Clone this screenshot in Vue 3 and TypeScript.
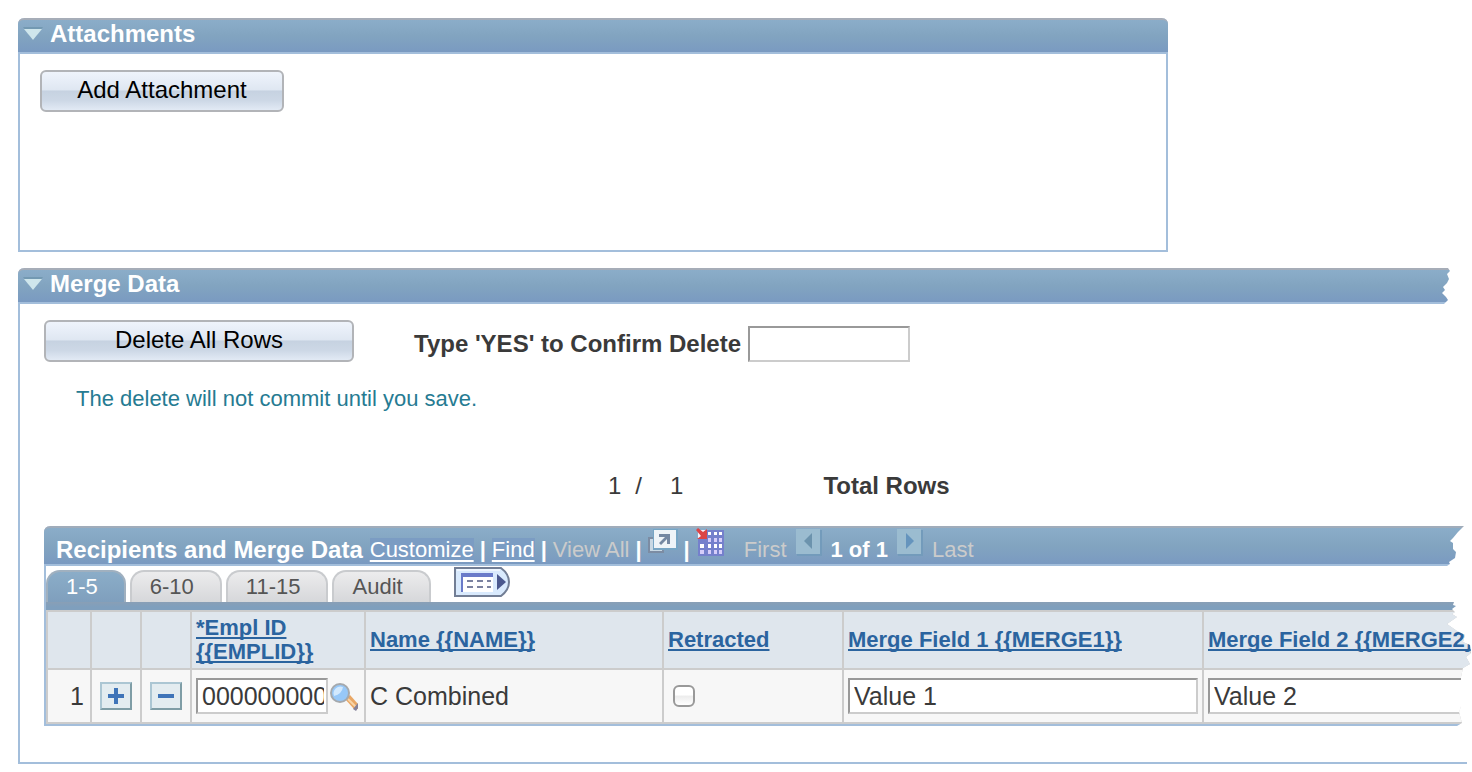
<script setup lang="ts">
import { ref } from 'vue'

interface Row {
  id: number
  emplId: string
  name: string
  retracted: boolean
  merge1: string
  merge2: string
}

const confirmText = ref('')
const tabs: string[] = ['1-5', '6-10', '11-15', 'Audit']
const activeTab = ref('1-5')
const headers: string[] = [
  'Name {{NAME}}',
  'Retracted',
  'Merge Field 1 {{MERGE1}}',
  'Merge Field 2 {{MERGE2}}',
]
const emplHeader: string[] = ['*Empl ID', '{{EMPLID}}']
const rows = ref<Row[]>([
  { id: 1, emplId: '00000000001', name: 'C Combined', retracted: false, merge1: 'Value 1', merge2: 'Value 2' },
])
</script>

<template>
  <main class="page">
    <section class="panel attachments">
      <h2 class="panel-head">
        <svg class="caret" viewBox="0 0 20 14" aria-hidden="true">
          <path d="M0 0h20L10 13z" fill="#7399b2" />
          <path d="M1 2h18L10 13z" fill="#cfe6ec" />
        </svg>
        Attachments
      </h2>
      <div class="panel-body">
        <button class="btn add" type="button">Add Attachment</button>
      </div>
    </section>

    <section class="panel merge">
      <h2 class="panel-head torn-head">
        <svg class="caret" viewBox="0 0 20 14" aria-hidden="true">
          <path d="M0 0h20L10 13z" fill="#7399b2" />
          <path d="M1 2h18L10 13z" fill="#cfe6ec" />
        </svg>
        Merge Data
      </h2>
      <div class="panel-body">
        <div class="delete-row">
          <button class="btn delete" type="button">Delete All Rows</button>
          <label class="confirm-label" for="confirm">Type 'YES' to Confirm Delete</label>
          <input id="confirm" v-model="confirmText" class="field confirm" type="text" />
        </div>
        <p class="note">The delete will not commit until you save.</p>
        <div class="counter">
          <span class="current">1</span>
          <span class="slash">/</span>
          <span class="total">1</span>
          <strong>Total Rows</strong>
        </div>

        <div class="grid">
          <div class="grid-head">
            <h3>Recipients and Merge Data</h3>
            <a href="#">Customize</a>
            <b>|</b>
            <a href="#">Find</a>
            <b>|</b>
            <span class="muted">View All</span>
            <b>|</b>
            <button class="icon-btn" type="button" aria-label="Zoom grid">
              <svg width="30" height="26" viewBox="0 0 30 26">
                <path d="M0 9h16v16H0z" fill="#7c8ca3" />
                <path d="M2 11h12v12H2z" fill="#c8d8e4" />
                <path d="M5 1h25v21H5z" fill="#76a5c4" />
                <path d="M6 2h22v18H6z" fill="#eef4f8" />
                <path d="M11 6h11v10h-3v-5l-6 6-2-2 6-6h-6z" fill="#7488a2" />
              </svg>
            </button>
            <b>|</b>
            <button class="icon-btn" type="button" aria-label="Download">
              <svg width="28" height="30" viewBox="0 0 28 30">
                <path d="M2 2h26v26H2z" fill="#7580cc" />
                <path d="M2 2h9v9H2z" fill="#f4f4fc" />
                <path d="M12 4h3v3h-3zM18 4h3v3h-3zM23 4h3v3h-3zM4 16h4v4H4zM12 16h3v4h-3zM18 16h3v4h-3zM23 16h3v4h-3z" fill="#fff" />
                <path d="M12 10h3v4h-3zM18 10h3v4h-3zM23 10h3v4h-3zM4 22h4v4H4zM12 22h3v4h-3zM18 22h3v4h-3zM23 22h3v4h-3z" fill="#d5cdfa" />
                <path d="M0 2l2-2 5 4 4-3v10H1l4-3z" fill="#dc4548" />
              </svg>
            </button>
            <span class="muted first">First</span>
            <button class="icon-btn nav" type="button" disabled aria-label="Previous">
              <svg width="26" height="28" viewBox="0 0 26 28">
                <path d="M1 2h25v26H1z" fill="#739bbb" />
                <path d="M0 1h24v25H0z" fill="#9bbcd0" />
                <path d="M16 5v16l-8-8z" fill="#6c93ad" />
              </svg>
            </button>
            <strong>1 of 1</strong>
            <button class="icon-btn nav" type="button" disabled aria-label="Next">
              <svg width="26" height="28" viewBox="0 0 26 28">
                <path d="M1 2h25v26H1z" fill="#739bbb" />
                <path d="M0 1h24v25H0z" fill="#9bbcd0" />
                <path d="M9 5v16l8-8z" fill="#6594bd" />
              </svg>
            </button>
            <span class="muted">Last</span>
          </div>

          <div class="tabs">
            <button
              v-for="tab in tabs"
              :key="tab"
              type="button"
              class="tab"
              :class="{ active: tab === activeTab }"
              @click="activeTab = tab"
            >{{ tab }}</button>
            <button class="show-all" type="button" aria-label="Show all columns">
              <svg width="56" height="31" viewBox="0 0 56 31">
                <path d="M1 1h46q8 6 8 14t-8 14H1z" fill="#d9eafd" stroke="#727e95" stroke-width="2" />
                <path d="M3 3h43" stroke="#eef6ff" stroke-width="2" />
                <path d="M7 7h32v18H7z" fill="#fff" />
                <path d="M7 6h32v4H9v15H7z" fill="#6a7bc9" />
                <path d="M13 14h6m4 0h6m4 0h4M13 20h6m4 0h6m4 0h4" stroke="#7b82a0" stroke-width="2" />
                <path d="M43 7v16l9-8z" fill="#4a588e" />
              </svg>
            </button>
          </div>
          <div class="bar"></div>

          <table>
            <colgroup>
              <col class="c-num" />
              <col class="c-act" />
              <col class="c-act" />
              <col class="c-empl" />
              <col class="c-name" />
              <col class="c-ret" />
              <col class="c-merge" />
              <col />
            </colgroup>
            <thead>
              <tr>
                <th></th>
                <th></th>
                <th></th>
                <th scope="col">
                  <a href="#">{{ emplHeader[0] }}<br />{{ emplHeader[1] }}</a>
                </th>
                <th v-for="h in headers" :key="h" scope="col"><a href="#">{{ h }}</a></th>
              </tr>
            </thead>
            <tbody>
              <tr v-for="row in rows" :key="row.id">
                <td class="num">{{ row.id }}</td>
                <td class="act">
                  <button class="icon-btn" type="button" aria-label="Add row">
                    <svg width="32" height="28" viewBox="0 0 32 28">
                      <path d="M0 0h32v28H0z" fill="#7f9da6" />
                      <path d="M0 0h32l-2 2H2v24l-2 2z" fill="#abc6d3" />
                      <path d="M2 2h28v24H2z" fill="#e3ecf0" />
                      <path d="M14 6h4v6h6v4h-6v6h-4v-6H8v-4h6z" fill="#3f74b8" />
                    </svg>
                  </button>
                </td>
                <td class="act">
                  <button class="icon-btn" type="button" aria-label="Delete row">
                    <svg width="32" height="28" viewBox="0 0 32 28">
                      <path d="M0 0h32v28H0z" fill="#7f9da6" />
                      <path d="M0 0h32l-2 2H2v24l-2 2z" fill="#abc6d3" />
                      <path d="M2 2h28v24H2z" fill="#e3ecf0" />
                      <path d="M8 12h16v4H8z" fill="#3f74b8" />
                    </svg>
                  </button>
                </td>
                <td>
                  <div class="lookup">
                    <input v-model="row.emplId" class="field empl" type="text" aria-label="Empl ID" />
                    <button class="icon-btn" type="button" aria-label="Look up Empl ID">
                      <svg width="30" height="30" viewBox="0 0 30 30">
                        <path d="M15 18l5-4 8 9v5h-4z" fill="#e9a765" />
                        <path d="M18 18l8 8" stroke="#f8d5a8" stroke-width="2" />
                        <path d="M23 28l5-6v5l-2 3z" fill="#85829a" />
                        <circle cx="10" cy="12" r="9" fill="#97c8f8" stroke="#a5a9ad" stroke-width="2" />
                        <path d="M4 15a7 7 0 0 1 9-9q-1 7-9 9z" fill="#d2e9fe" />
                      </svg>
                    </button>
                  </div>
                </td>
                <td>{{ row.name }}</td>
                <td><input v-model="row.retracted" class="check" type="checkbox" aria-label="Retracted" /></td>
                <td><input v-model="row.merge1" class="field wide" type="text" aria-label="Merge Field 1" /></td>
                <td class="last"><input v-model="row.merge2" class="field wide" type="text" aria-label="Merge Field 2" /></td>
              </tr>
            </tbody>
          </table>
        </div>
      </div>
    </section>
  </main>
</template>

<style>
body {
  margin: 0;
  background: #fff;
}
</style>

<style scoped>
.page {
  padding: 18px 0 0 18px;
  overflow: hidden;
  font-family: "Liberation Sans", Arial, sans-serif;
  font-size: 24px;
  line-height: 28px;
  color: #3a3a3a;
  white-space: nowrap;
}
.page * {
  box-sizing: border-box;
}
h2,
h3,
p {
  margin: 0;
}
button,
input {
  font: inherit;
  color: inherit;
}
button {
  cursor: pointer;
}
svg {
  display: block;
}
.panel {
  border: 0 solid #a3bedb;
}
.attachments {
  max-width: 1150px;
  min-height: 234px;
  border-width: 0 2px 2px;
  border-radius: 6px 6px 0 0;
}
.merge {
  margin: 16px 5px 0 0;
  border-width: 0 0 2px 2px;
  border-radius: 6px 0 0 0;
}
.panel-head {
  display: flex;
  align-items: center;
  gap: 7px;
  margin-left: -2px;
  padding: 0 5px 4px;
  height: 36px;
  border-top: 2px solid #a6adb8;
  border-bottom: 2px solid #a3bedb;
  border-radius: 6px 6px 0 0;
  background: linear-gradient(#8badc9, #82a4c0 50%, #7a9ac1);
  font-size: 24px;
  line-height: 28px;
  color: #fff;
}
.attachments .panel-head {
  margin-right: -2px;
}
.torn-head {
  margin-right: 17px;
  border-top-right-radius: 0;
  clip-path: polygon(0 0, calc(100% - 2px) 0, 100% 3px, calc(100% - 3px) 6px, calc(100% - 1px) 11px, calc(100% - 3px) 15px, calc(100% - 7px) 19px, calc(100% - 5px) 22px, calc(100% - 8px) 25px, calc(100% - 4px) 29px, calc(100% - 2px) 32px, calc(100% - 6px) 36px, 0 36px);
}
.caret {
  width: 20px;
  height: 14px;
}
.attachments .panel-body {
  padding: 16px 20px;
}
.merge .panel-body {
  padding: 16px 0 36px 24px;
}
.btn {
  display: block;
  height: 42px;
  padding: 0 0 2px;
  border: 2px solid #b2b4b8;
  border-radius: 6px;
  background: linear-gradient(#eff4fc, #dfe7f2 47%, #c6d2e1 50%, #cdd8e6 75%, #e2eaf5);
  color: #000;
}
.add {
  width: 244px;
}
.delete {
  width: 310px;
}
.delete-row {
  display: flex;
  align-items: flex-end;
}
.confirm-label {
  margin-left: 60px;
  padding-bottom: 4px;
  font-weight: bold;
}
.field {
  height: 36px;
  padding: 0 4px;
  border: 2px solid;
  border-color: #999 #ccc #ccc #999;
  border-radius: 0;
  background: #fff;
  outline: 0;
}
.confirm {
  width: 162px;
  margin-left: 7px;
}
.note {
  margin: 25px 0 0 32px;
  font-size: 22px;
  line-height: 24px;
  color: #267b92;
}
.counter {
  display: flex;
  margin: 61px 0 26px 564px;
}
.slash {
  margin: 0 28px 0 14px;
}
.counter strong {
  margin-left: 140px;
}
.grid {
  margin-right: -5px;
  border: solid #a3bedb;
  border-width: 0 0 2px 2px;
  border-radius: 6px 0 0 0;
  clip-path: polygon(0 0, calc(100% - 8px) 0, calc(100% - 12px) 4px, calc(100% - 14px) 6px, calc(100% - 19px) 12px, calc(100% - 22px) 15px, calc(100% - 19px) 17px, calc(100% - 19px) 23px, calc(100% - 16px) 26px, calc(100% - 17px) 32px, calc(100% - 23px) 36px, calc(100% - 22px) 38px, calc(100% - 25px) 40px, calc(100% - 25px) 76px, calc(100% - 18px) 76px, calc(100% - 19px) 79px, calc(100% - 16px) 80px, calc(100% - 20px) 83px, calc(100% - 17px) 86px, calc(100% - 20px) 88px, calc(100% - 15px) 91px, calc(100% - 25px) 98px, calc(100% - 15px) 105px, calc(100% - 7px) 109px, calc(100% - 9px) 116px, calc(100% - 2px) 119px, calc(100% - 1px) 127px, calc(100% - 6px) 131px, calc(100% - 2px) 138px, calc(100% - 9px) 142px, calc(100% - 11px) 151px, calc(100% - 11px) 180px, calc(100% - 13px) 186px, calc(100% - 10px) 197px, calc(100% - 15px) 200px, 0 200px);
}
.grid-head {
  display: flex;
  align-items: flex-end;
  gap: 6px;
  height: 40px;
  margin-left: -2px;
  padding-left: 12px;
  border-top: 2px solid #a0acba;
  border-bottom: 2px solid #a3bedb;
  border-radius: 6px 0 0 0;
  background: linear-gradient(#8badc9, #82a4c0 50%, #7a9ac1);
  font-size: 22px;
  line-height: 28px;
  color: #fff;
}
.grid-head h3 {
  margin-right: 1px;
  font-size: 24px;
}
.grid-head a {
  color: #fff;
  line-height: 24px;
  margin-bottom: 2px;
  background: #7b9cc3;
  text-underline-offset: 3px;
  text-decoration-thickness: 2px;
}
.muted {
  color: #cbcbcb;
}
.first {
  margin-left: 14px;
}
.icon-btn {
  padding: 0;
  border: 0;
  background: none;
}
.grid-head .icon-btn {
  align-self: flex-start;
}
.grid-head .nav {
  margin: 0 3px;
}
.tabs {
  display: flex;
  align-items: flex-end;
  gap: 4px;
  height: 36px;
}
.tab {
  height: 32px;
  padding: 0 26px 0 18px;
  border: 2px solid #c9cbce;
  border-bottom: 0;
  border-radius: 14px 14px 0 0;
  background: linear-gradient(#ececed, #d6d7da);
  font-size: 22px;
  line-height: 28px;
  color: #555;
}
.tab.active {
  border-color: #a0b0bf;
  background: linear-gradient(#8badc8, #7f9fbd);
  color: #fff;
}
.show-all {
  align-self: flex-start;
  margin: 1px 0 0 19px;
  padding: 0;
  border: 0;
  background: none;
}
.bar {
  height: 8px;
  background: linear-gradient(#899fb6, #7f9fbd 60%);
}
table {
  width: 100%;
  table-layout: fixed;
  border-spacing: 2px;
  background: #ccc;
}
.c-num {
  width: 42px;
}
.c-act {
  width: 48px;
}
.c-empl {
  width: 172px;
}
.c-name {
  width: 296px;
}
.c-ret {
  width: 178px;
}
.c-merge {
  width: 358px;
}
th {
  height: 56px;
  padding: 0 4px;
  background: #dfe6ed;
  font-size: 22px;
  line-height: 24px;
  text-align: left;
}
th a {
  color: #2b649f;
  text-underline-offset: 2px;
  text-decoration-thickness: 2px;
  text-decoration-skip-ink: none;
}
td {
  height: 52px;
  padding: 0 4px;
  background: #f7f7f7;
  font-size: 25px;
}
.num {
  padding-right: 6px;
  text-align: right;
}
.act .icon-btn {
  display: block;
  margin: 0 auto;
}
.lookup {
  display: flex;
  align-items: center;
  gap: 2px;
}
.empl {
  width: 132px;
  padding-right: 2px;
}
.wide {
  display: block;
  width: 100%;
}
.last {
  padding-right: 0;
}
.check {
  appearance: none;
  display: block;
  width: 22px;
  height: 22px;
  margin: 0 0 0 5px;
  border: 2px solid #999;
  border-radius: 6px;
  background: linear-gradient(#fff 45%, #ececec 50%, #fff);
}
.check:checked {
  background: #3f74b8;
}
</style>
